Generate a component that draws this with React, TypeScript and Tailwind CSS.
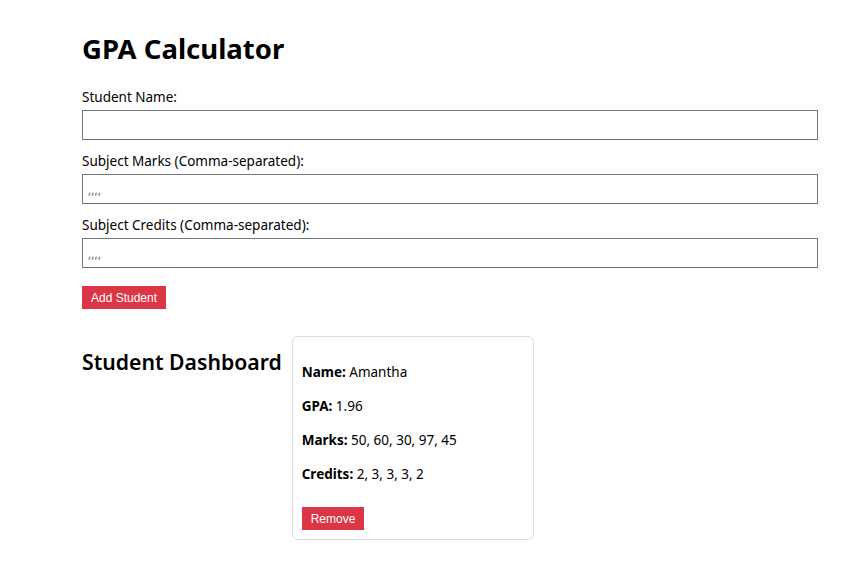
import { useState } from 'react';

type Student = { name: string; gpa: string; marks: number[]; credits: number[] };

export default function App() {
  const [students, setStudents] = useState<Student[]>([
    { name: 'Amantha', gpa: '1.96', marks: [50, 60, 30, 97, 45], credits: [2, 3, 3, 3, 2] },
  ]);

  return (
    <div className="min-h-screen bg-white text-black font-['Noto_Sans',sans-serif]">
      <div className="ml-[82px] w-[736px] pt-[29px]">
        <h1 className="text-[27.5px] font-bold leading-[40px] mb-[19px]">GPA Calculator</h1>

        <label className="block text-[13.5px] leading-[18px] mb-[4px]">Student Name:</label>
        <input className="block w-full h-[30px] border border-[#767676] px-[5px] mb-[12px] outline-none" />

        <label className="block text-[13.5px] leading-[18px] mb-[4px]">Subject Marks (Comma-separated):</label>
        <input placeholder=",,,," className="block w-full h-[30px] border border-[#767676] px-[5px] text-[12px] placeholder:text-[#757575] mb-[12px] outline-none" />

        <label className="block text-[13.5px] leading-[18px] mb-[4px]">Subject Credits (Comma-separated):</label>
        <input placeholder=",,,," className="block w-full h-[30px] border border-[#767676] px-[5px] text-[12px] placeholder:text-[#757575] mb-[18px] outline-none" />

        <button className="block h-[23px] px-[9px] bg-[#dc3545] text-white text-[12px] font-['Liberation_Sans',Arial,sans-serif]">
          Add Student
        </button>

        <div className="flex items-start gap-[10px] mt-[27px]">
          <h2 className="text-[21.2px] font-semibold leading-[30px] mt-[11px]">Student Dashboard</h2>
          <div className="flex flex-col gap-[10px]">
            {students.map((s, i) => (
              <div key={i} className="w-[242px] border border-[#ddd] rounded-[6px] pt-[10px] pb-[9px] pl-[9px] pr-[10px] text-[13.5px] leading-[18px]">
                <p className="mt-[16px] mb-[16px]"><b>Name:</b> {s.name}</p>
                <p className="mb-[16px]"><b>GPA:</b> {s.gpa}</p>
                <p className="mb-[16px]"><b>Marks:</b> {s.marks.join(', ')}</p>
                <p className="mb-[24px]"><b>Credits:</b> {s.credits.join(', ')}</p>
                <button
                  onClick={() => setStudents(students.filter((_, j) => j !== i))}
                  className="block h-[23px] px-[9px] bg-[#dc3545] text-white text-[12px] font-['Liberation_Sans',Arial,sans-serif]"
                >
                  Remove
                </button>
              </div>
            ))}
          </div>
        </div>
      </div>
    </div>
  );
}
